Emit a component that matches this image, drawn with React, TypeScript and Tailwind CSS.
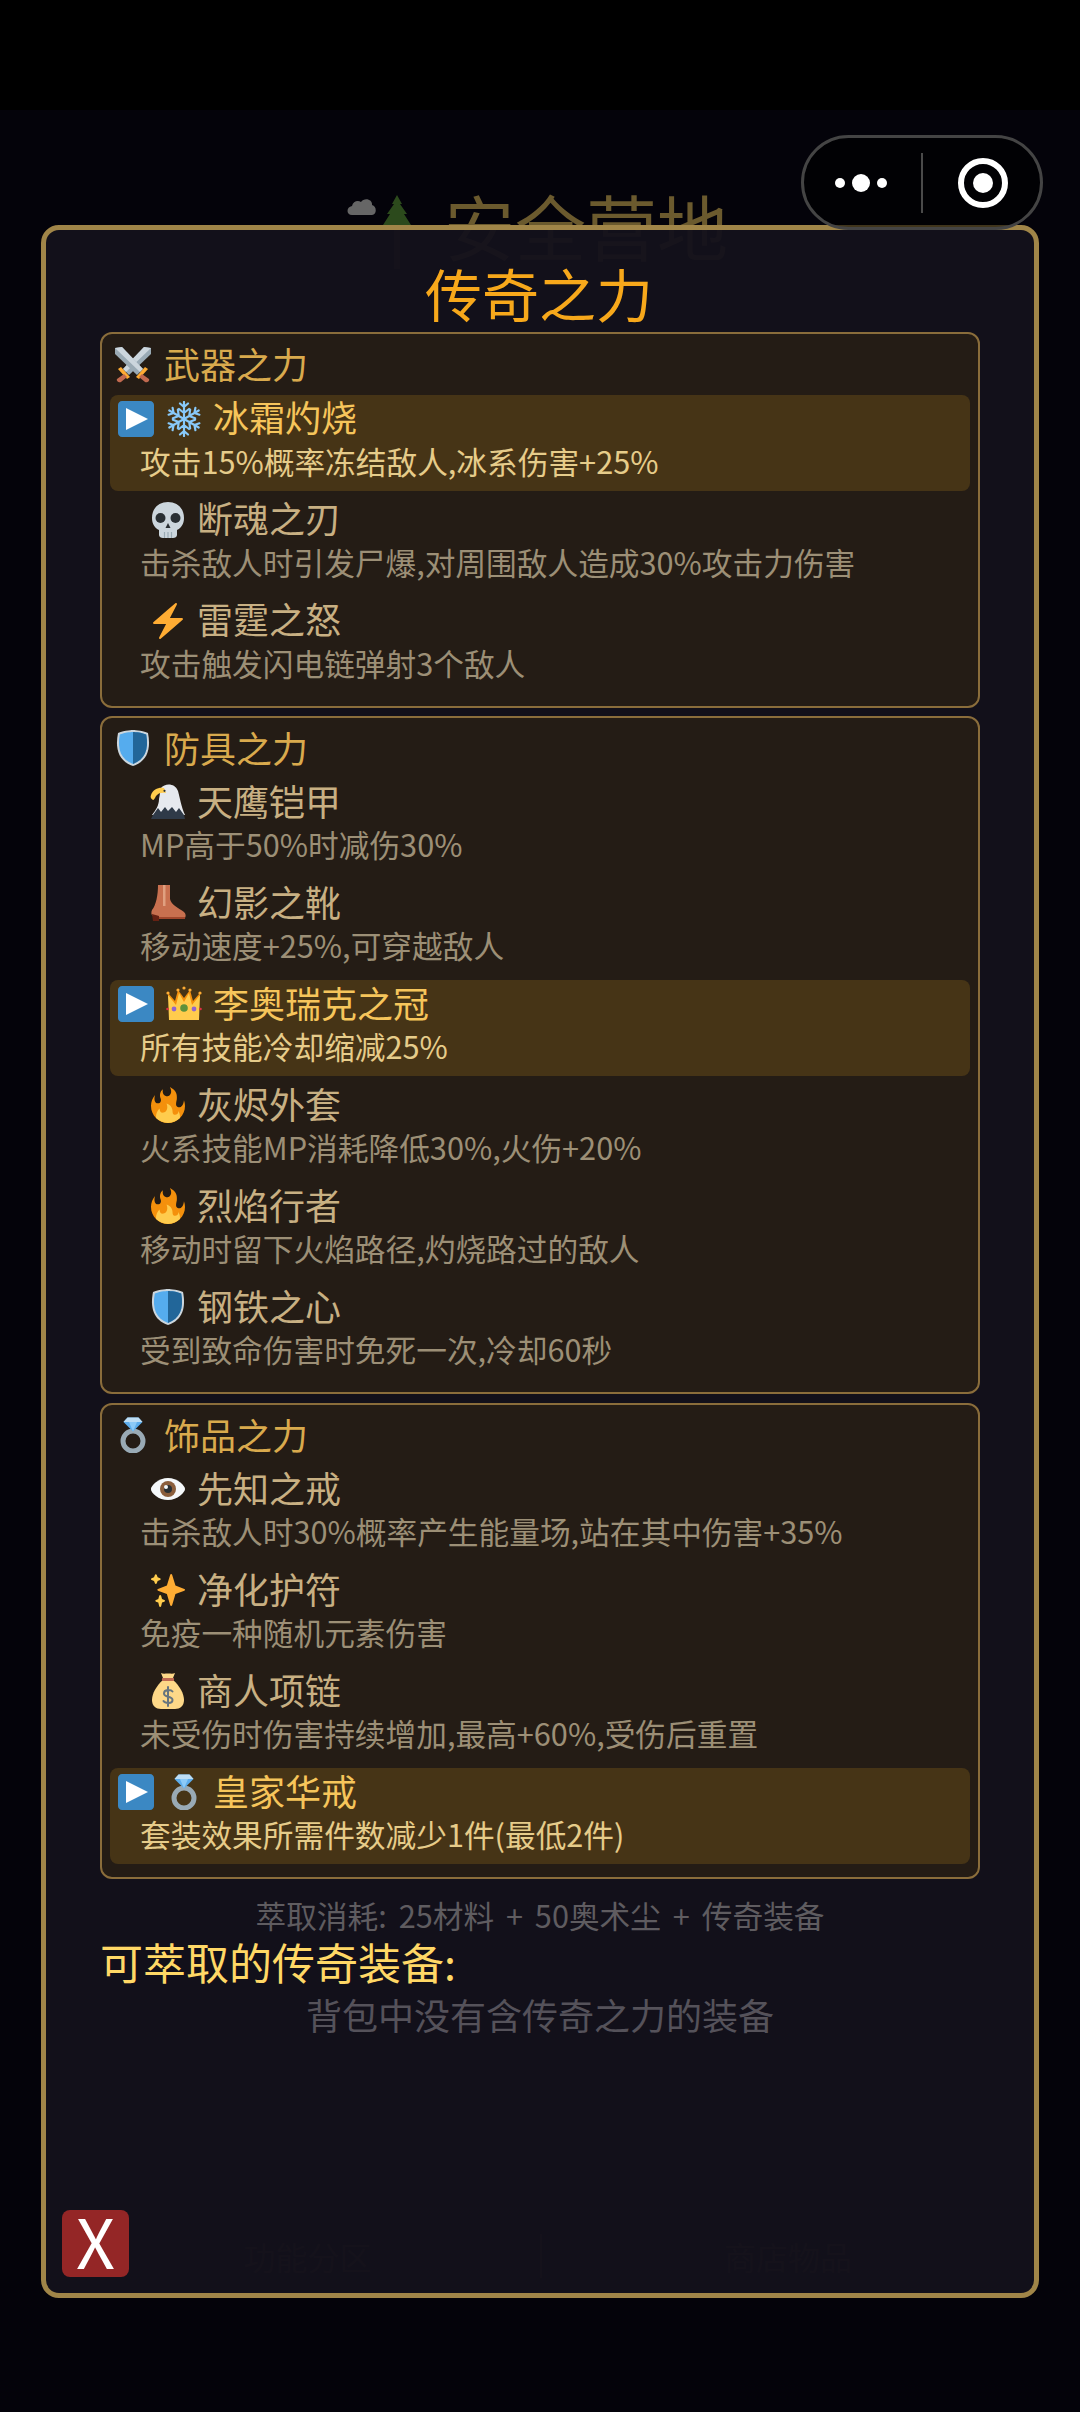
import React from "react";

type IconName =
  | "swords"
  | "snow"
  | "skull"
  | "bolt"
  | "shield"
  | "eagle"
  | "boot"
  | "crown"
  | "fire"
  | "ring"
  | "eye"
  | "spark"
  | "bag";

const Icon: React.FC<{ name: IconName; className?: string }> = ({ name, className = "w-9 h-9 shrink-0" }) => (
  <svg viewBox="0 0 36 36" className={className}>
    {name === "swords" && (
      <>
        <path d="M36 1 L29 0 L8 22 L14 28 L36 7z" fill="#99AAB5" />
        <path d="M36 1 L29 0 L8 22 L11 25z" fill="#CCD6DD" />
        <path d="M0 1 L7 0 L28 22 L22 28 L0 7z" fill="#9AAAB4" />
        <path d="M0 1 L7 0 L28 22 L25 25z" fill="#CCD6DD" />
        <path d="M3 22 L6 20 L15 30 L12 32z" fill="#FFAC33" />
        <path d="M33 22 L30 20 L21 30 L24 32z" fill="#FFAC33" />
        <path d="M9 27 L12 30 L6 35 C4 36 1 34 2 32z" fill="#C1694F" />
        <path d="M27 27 L24 30 L30 35 C32 36 35 34 34 32z" fill="#C1694F" />
      </>
    )}
    {name === "snow" && (
      <g stroke="#88C9F9" strokeWidth="2.2" strokeLinecap="round" fill="none">
        {[0, 60, 120, 180, 240, 300].map((a) => (
          <path key={a} transform={`rotate(${a} 18 18)`} d="M18 18 V1 M18 6 L14 2.5 M18 6 L22 2.5 M18 12 L13 8 M18 12 L23 8" />
        ))}
      </g>
    )}
    {name === "skull" && (
      <>
        <path d="M34 16 C34 6 27 0 18 0 S2 6 2 16 C2 22 5 26 9 28 V33 C9 35 11 36 13 36 H23 C25 36 27 35 27 33 V28 C31 26 34 22 34 16z" fill="#CCD6DD" />
        <circle cx="10.5" cy="16" r="5" fill="#292F33" />
        <circle cx="25.5" cy="16" r="5" fill="#292F33" />
        <path d="M18 21 L15.5 26 H20.5z" fill="#292F33" />
        <path d="M14.5 30 V36 M18 30 V36 M21.5 30 V36" stroke="#9AAAB4" strokeWidth="1.2" />
      </>
    )}
    {name === "bolt" && (
      <path
        fill="#FFAC33"
        d="M32.938 15.651C32.792 15.26 32.418 15 32 15H19.925L26.891 1.458c.219-.426.106-.947-.271-1.243C26.437.071 26.218 0 26 0c-.233 0-.466.082-.653.243L18 6.588 3.347 19.243c-.316.273-.43.714-.284 1.105S3.582 21 4 21h12.075L9.109 34.542c-.219.426-.106.947.271 1.243.182.144.401.215.62.215.233 0 .466-.082.653-.243L18 29.412l14.653-12.655c.317-.273.43-.714.285-1.106z"
      />
    )}
    {name === "shield" && (
      <>
        <path d="M33 3c-7-3-15-3-15-3S10 0 3 3C0 18 3 31 18 36c15-5 18-18 15-33z" fill="#CCD6DD" />
        <path d="M18 33.884C6.412 29.729 1.961 19.831 4.76 4.444 11.063 2.029 17.928 2 18 2c.071 0 6.958.04 13.24 2.444 2.799 15.387-1.652 25.285-13.24 29.44z" fill="#55ACEE" />
        <path d="M31.24 4.444C24.958 2.04 18.071 2 18 2v31.884c11.588-4.155 16.039-14.053 13.24-29.44z" fill="#226699" />
      </>
    )}
    {name === "eagle" && (
      <>
        <path d="M11 4 C15 -1 25 -1 28 7 C30 14 31 22 35 31 H2 C6 26 9 21 9 15z" fill="#E6E9EE" />
        <path d="M1 11 C3 5 9 3 14 4 L16 9 C12 8 8 9 6 12 C5 14 4 16 3 16 C1 15 0 13 1 11z" fill="#FFCC4D" />
        <circle cx="14.5" cy="6.8" r="1.1" fill="#292F33" />
        <path d="M1 35 L3 31 L8 24 L11 28 L15 23 L18 27 L22 23 L26 28 L29 24 L34 31 L35 35z" fill="#2F3A48" />
      </>
    )}
    {name === "boot" && (
      <>
        <path d="M8 0 H20 V14 C21 20 29 23 34 27 C36 29 36 31 35 33 H9 L3 31 C1 30 1 27 2 25 C6 20 8 10 8 0z" fill="#C8704F" />
        <path d="M13 0 H15.5 V21 H13z" fill="#E0A080" />
        <path d="M2 29 C4 30 7 30 9 31 V36 H3z" fill="#662113" />
        <path d="M9 32 H35 V34 H9z" fill="#A0472C" />
      </>
    )}
    {name === "crown" && (
      <>
        <path d="M2 7 L9 15 L12 4 L18 12 L24 4 L27 15 L34 7 L32 26 H4z" fill="#F4900C" />
        <path d="M2 9 L10 19 L13 7 L18 16 L23 7 L26 19 L34 9 L33 34 H3z" fill="#FFCC4D" />
        <circle cx="2" cy="7" r="1.6" fill="#FFAC33" />
        <circle cx="12" cy="4" r="1.6" fill="#FFAC33" />
        <circle cx="18" cy="2" r="1.6" fill="#FFAC33" />
        <circle cx="24" cy="4" r="1.6" fill="#FFAC33" />
        <circle cx="34" cy="7" r="1.6" fill="#FFAC33" />
        <circle cx="1.5" cy="23" r="1.3" fill="#DD2E44" />
        <circle cx="8" cy="23" r="2.4" fill="#9266CC" />
        <circle cx="18" cy="22" r="3.8" fill="#5C913B" />
        <circle cx="28" cy="23" r="2.4" fill="#9266CC" />
        <circle cx="34.5" cy="23" r="1.3" fill="#DD2E44" />
      </>
    )}
    {name === "fire" && (
      <>
        <path
          fill="#F4900C"
          d="M35 19c0-2.062-.367-4.039-1.04-5.868-.46 5.389-3.333 8.157-6.335 6.868-2.812-1.208-.917-5.917-.777-8.164.236-3.809-.012-8.169-6.931-11.794 2.875 5.5.333 8.917-2.333 9.125-2.958.231-5.667-2.542-4.667-7.042-3.238 2.386-3.332 6.402-2.333 9 1.042 2.708-.042 4.958-2.583 5.208-2.84.28-4.418-3.041-2.963-8.333C2.52 10.965 1 14.805 1 19c0 9.389 7.611 17 17 17s17-7.611 17-17z"
        />
        <path
          fill="#FFCC4D"
          d="M28.394 23.999c.148 3.084-2.561 4.293-4.019 3.709-2.106-.843-1.541-2.291-2.083-5.291s-2.625-5.083-5.708-6c2.25 6.333-1.247 8.667-3.08 9.084-1.872.426-3.753-.001-3.968-4.007C7.352 23.668 6 26.676 6 30c0 .368.023.73.055 1.09C9.125 34.124 13.342 36 18 36s8.875-1.876 11.945-4.91c.032-.36.055-.722.055-1.09 0-2.187-.584-4.236-1.606-6.001z"
        />
      </>
    )}
    {name === "ring" && (
      <>
        <circle cx="18" cy="24" r="10" fill="none" stroke="#99AAB5" strokeWidth="5" />
        <path d="M8.5 5 L12.5 0.5 H23.5 L27.5 5 L18 14.5z" fill="#5DADEC" />
        <path d="M12.5 0.5 H23.5 L27.5 5 H8.5z" fill="#BDDDF4" />
        <path d="M14 5 H22 L18 14.5z" fill="#8CCAF7" />
      </>
    )}
    {name === "eye" && (
      <>
        <path d="M35.059 18c0 3.304-7.642 11-17.067 11C8.566 29 .925 22.249.925 18c0-3.313 7.642-11 17.067-11 9.425 0 17.067 7.686 17.067 11z" fill="#F5F8FA" />
        <circle cx="18" cy="18" r="8" fill="#8B5E3C" />
        <circle cx="18" cy="18" r="4" fill="#292F33" />
        <circle cx="16" cy="16" r="2" fill="#F5F8FA" />
      </>
    )}
    {name === "spark" && (
      <>
        <path
          fill="#FFAC33"
          d="M34.347 16.893l-8.899-3.294-3.323-10.891c-.128-.42-.517-.708-.956-.708-.439 0-.828.288-.956.708l-3.322 10.891-8.9 3.294c-.393.146-.653.519-.653.938 0 .418.26.793.653.938l8.895 3.293 3.324 11.223c.126.424.516.715.959.715.442 0 .833-.291.959-.716l3.324-11.223 8.896-3.293c.391-.144.652-.518.652-.937 0-.418-.261-.792-.653-.938z"
        />
        <path
          fill="#FFCC4D"
          d="M14.347 27.894l-2.314-.856-.9-3.3c-.118-.436-.513-.738-.964-.738-.451 0-.846.302-.965.737l-.9 3.3-2.313.856c-.393.145-.653.52-.653.938 0 .418.26.793.653.938l2.301.853.907 3.622c.112.444.511.756.97.756.459 0 .858-.312.97-.757l.907-3.622 2.301-.853c.393-.144.653-.519.653-.937 0-.418-.26-.793-.653-.937z"
        />
        <path
          fill="#FFCC4D"
          d="M10.009 6.231l-2.364-.875-.876-2.365c-.145-.393-.519-.653-.938-.653-.418 0-.792.26-.938.653l-.875 2.365-2.365.875c-.393.146-.653.52-.653.938 0 .418.26.793.653.938l2.365.875.875 2.365c.146.393.52.653.938.653.418 0 .792-.26.938-.653l.875-2.365 2.365-.875c.393-.146.653-.52.653-.938 0-.418-.26-.793-.653-.938z"
        />
      </>
    )}
    {name === "bag" && (
      <>
        <path d="M13 7 C6 13 2 21 2 27 C2 33 6 36 11 36 H25 C30 36 34 33 34 27 C34 21 30 13 23 7z" fill="#FDD888" />
        <path d="M11 0 C13 1 15 .5 18 .5 C21 .5 23 1 25 0 L23 5 H13z" fill="#FDD888" />
        <path d="M12.5 5 H23.5 C24.3 5 24.3 8 23.5 8 H12.5 C11.7 8 11.7 5 12.5 5z" fill="#BF6952" />
        <path d="M22.5 18.5 C21 16.5 14 16 14 20.5 C14 25 22.5 22.5 22.5 27 C22.5 31 15 30.5 13.5 28 M18 14 V33" fill="none" stroke="#67757F" strokeWidth="2" strokeLinecap="round" />
      </>
    )}
  </svg>
);

const PlayBox = () => (
  <svg viewBox="0 0 36 36" className="w-9 h-9 shrink-0">
    <path d="M36 32c0 2.209-1.791 4-4 4H4c-2.209 0-4-1.791-4-4V4c0-2.209 1.791-4 4-4h28c2.209 0 4 1.791 4 4v28z" fill="#3B88C3" />
    <path d="M8 7 L30 18 L8 29z" fill="#FFFFFF" />
  </svg>
);

type Power = { icon: IconName; name: string; desc: string; active?: boolean };

const sections: { icon: IconName; title: string; items: Power[] }[] = [
  {
    icon: "swords",
    title: "武器之力",
    items: [
      { icon: "snow", name: "冰霜灼烧", desc: "攻击15%概率冻结敌人,冰系伤害+25%", active: true },
      { icon: "skull", name: "断魂之刃", desc: "击杀敌人时引发尸爆,对周围敌人造成30%攻击力伤害" },
      { icon: "bolt", name: "雷霆之怒", desc: "攻击触发闪电链弹射3个敌人" },
    ],
  },
  {
    icon: "shield",
    title: "防具之力",
    items: [
      { icon: "eagle", name: "天鹰铠甲", desc: "MP高于50%时减伤30%" },
      { icon: "boot", name: "幻影之靴", desc: "移动速度+25%,可穿越敌人" },
      { icon: "crown", name: "李奥瑞克之冠", desc: "所有技能冷却缩减25%", active: true },
      { icon: "fire", name: "灰烬外套", desc: "火系技能MP消耗降低30%,火伤+20%" },
      { icon: "fire", name: "烈焰行者", desc: "移动时留下火焰路径,灼烧路过的敌人" },
      { icon: "shield", name: "钢铁之心", desc: "受到致命伤害时免死一次,冷却60秒" },
    ],
  },
  {
    icon: "ring",
    title: "饰品之力",
    items: [
      { icon: "eye", name: "先知之戒", desc: "击杀敌人时30%概率产生能量场,站在其中伤害+35%" },
      { icon: "spark", name: "净化护符", desc: "免疫一种随机元素伤害" },
      { icon: "bag", name: "商人项链", desc: "未受伤时伤害持续增加,最高+60%,受伤后重置" },
      { icon: "ring", name: "皇家华戒", desc: "套装效果所需件数减少1件(最低2件)", active: true },
    ],
  },
];

const PowerRow: React.FC<{ power: Power }> = ({ power }) => (
  <div className={`h-[96px] mb-[5px] mx-[8px] rounded-[8px] ${power.active ? "bg-[#463416]" : ""}`}>
    <div className={`flex items-center h-[48px] ${power.active ? "pl-[8px]" : "pl-[40px]"}`}>
      {power.active && (
        <span className="mr-[12px] flex">
          <PlayBox />
        </span>
      )}
      <Icon name={power.icon} />
      <span className={`ml-[11px] mb-[5px] text-[36px] leading-[48px] ${power.active ? "text-[#f6c55b]" : "text-[#c8b083]"}`}>{power.name}</span>
    </div>
    <div className={`pl-[30px] -mt-[2px] text-[30.7px] leading-[40px] whitespace-nowrap ${power.active ? "text-[#e6cc8a]" : "text-[#9c8f76]"}`}>{power.desc}</div>
  </div>
);

export default function App() {
  return (
    <div
      className="relative w-[1080px] h-[2412px] overflow-hidden bg-[#04030a] flex flex-col"
      style={{ fontFamily: '"Noto Sans CJK SC", "Noto Sans", sans-serif' }}
    >
      {/* status bar */}
      <div className="h-[110px] bg-black shrink-0" />

      {/* page behind the dialog */}
      <div className="flex justify-center items-start pt-[85px] pr-[8px]">
        <svg viewBox="0 0 70 74" className="w-[70px] h-[74px] mr-[30px]">
          <path d="M8 20 C2 20 2 12 8 11 C9 6 14 5 17 7 C20 2 29 4 28 10 C33 11 33 20 28 20z" fill="#666" />
          <path d="M53 0 L58 9 L56 9 L63 19 L60 19 L67 30 L39 30 L46 19 L43 19 L50 9 L48 9z" fill="#2c4a1c" />
          <path d="M50 30 H56 V74 H50z" fill="#3a2a18" />
        </svg>
        <span className="-mt-[9px] text-[71px] leading-[76px] text-[#6b5a2e]">安全营地</span>
      </div>
      <div className="mt-auto mb-[134px] flex text-[32px] leading-[44px] text-[#3a3320]">
        <div className="w-[540px] text-center pl-[75px]">功能分区</div>
        <div className="flex-1 text-center border-l-2 border-[#3a3320] pr-[46px]">商店物品</div>
      </div>

      {/* dialog */}
      <div className="absolute left-[41px] top-[225px] w-[998px] h-[2073px] flex flex-col rounded-[18px] border-[5px] border-[#a08548] bg-[#13111b]/95">
        <div className="pt-[22px] h-[102px] pr-[2px] text-center text-[57px] leading-[80px] text-[#f7a81b]">传奇之力</div>

        {sections.map((s) => (
          <div key={s.title} className="mx-[54px] mb-[8.3px] rounded-[12px] border-2 border-[#8a6d3b] bg-[#241c15] pb-[8px]">
            <div className="flex items-center h-[48px] mt-[6.5px] mb-[6px] pl-[13px]">
              <Icon name={s.icon} />
              <span className="ml-[13px] mb-[3px] text-[36px] leading-[48px] text-[#d9aa4d]">{s.title}</span>
            </div>
            {s.items.map((p) => (
              <PowerRow key={p.name} power={p} />
            ))}
          </div>
        ))}

        <div className="mt-[8px] text-center text-[30.7px] leading-[40px] text-[#5f5c60] [word-spacing:5px]">萃取消耗: 25材料 + 50奥术尘 + 传奇装备</div>
        <div className="mt-[1px] ml-[54px] text-[43px] leading-[50px] text-[#ffd866]">可萃取的传奇装备:</div>
        <div className="mt-[6px] text-center text-[36px] leading-[44px] text-[#55525a]">背包中没有含传奇之力的装备</div>

        <button className="mt-auto mb-[16px] ml-[16px] w-[67px] h-[67px] rounded-[8px] bg-[#942626] text-white text-[68px] leading-[60px] pb-[8px] flex items-center justify-center">
          X
        </button>
      </div>

      {/* wechat capsule */}
      <div className="absolute left-[801px] top-[135px] w-[242px] h-[95px] rounded-full border-[3px] border-[#444] bg-black/60 flex items-center">
        <div className="flex items-center w-[117px] justify-center pr-[3px] gap-[7px]">
          <span className="w-[10px] h-[10px] rounded-full bg-white" />
          <span className="w-[18px] h-[18px] rounded-full bg-white" />
          <span className="w-[10px] h-[10px] rounded-full bg-white" />
        </div>
        <div className="w-[2px] h-[60px] bg-[#4a4a4a]" />
        <div className="flex-1 flex justify-center pl-[2px]">
          <span className="w-[50px] h-[50px] rounded-full border-[6px] border-white flex items-center justify-center">
            <span className="w-[20px] h-[20px] rounded-full bg-white" />
          </span>
        </div>
      </div>
    </div>
  );
}
